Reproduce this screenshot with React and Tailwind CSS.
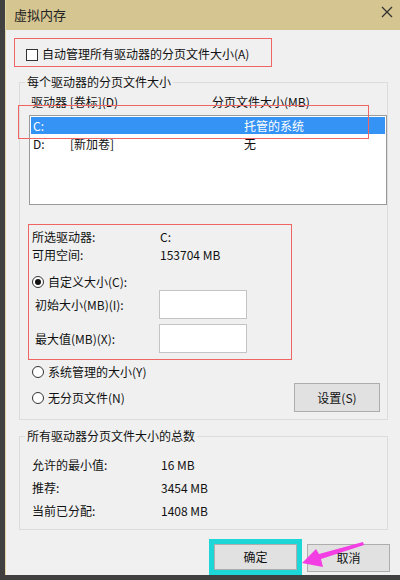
import React from "react";

const font = { fontFamily: '"Noto Sans CJK SC", "Noto Sans", sans-serif' };

function Radio({ checked }) {
  return (
    <span className="w-[12px] h-[12px] rounded-full border border-[#333] bg-white flex items-center justify-center shrink-0">
      {checked && <span className="w-[6px] h-[6px] rounded-full bg-[#111]" />}
    </span>
  );
}

function Row({ label, value, w = "w-[128px]" }) {
  return (
    <div className="flex items-center h-[18px]">
      <span className={w}>{label}</span>
      <span>{value}</span>
    </div>
  );
}

export default function App() {
  return (
    <div style={font} className="w-[400px] h-[580px] bg-[#404040] pl-[5px] relative overflow-hidden text-[12px] text-[#111]">
      <div className="h-[575px] bg-[#f0f0f0] border-l border-[#e2d6a4] flex flex-col">
        {/* title bar */}
        <div className="h-[30px] bg-[#d5c591] flex items-center justify-between pl-[8px] pr-[7px] shrink-0">
          <span className="text-[13px] text-[#222]">虚拟内存</span>
          <svg width="12" height="12" viewBox="0 0 12 12" className="mb-[7px]">
            <path d="M1 1 L11 11 M11 1 L1 11" stroke="#333" strokeWidth="1.3" />
          </svg>
        </div>

        {/* auto manage checkbox */}
        <div className="mt-[8px] ml-[8px] w-[258px] h-[29px] border border-[#f06464] flex items-end pl-[11px] pb-[4px] gap-[4px]">
          <span className="w-[12px] h-[12px] border border-[#333] bg-white mb-[1px]" />
          <span className="leading-[16px]">自动管理所有驱动器的分页文件大小(A)</span>
        </div>

        {/* group 1 */}
        <fieldset className="mt-[7px] ml-[13px] w-[369px] border border-[#dcdcdc] relative">
          <legend className="ml-[5px] px-[2px] leading-[16px]">每个驱动器的分页文件大小</legend>
          <div className="pl-[11px] mt-[4px] flex h-[16px] items-center">
            <span className="w-[181px]">驱动器 [卷标](D)</span>
            <span>分页文件大小(MB)</span>
          </div>
          <div className="ml-[9px] mt-[5px] w-[358px] h-[90px] bg-white border border-[#9a9a9a] pt-[1px] px-[1px]">
            <div className="h-[17px] bg-[#3593f5] text-white flex items-center pl-[2px]">
              <span className="w-[211px]">C:</span>
              <span>托管的系统</span>
            </div>
            <div className="h-[17px] mt-[1px] flex items-center pl-[2px]">
              <span className="w-[37px]">D:</span>
              <span className="w-[174px]">[新加卷]</span>
              <span>无</span>
            </div>
          </div>

          {/* details */}
          <div className="mt-[19px] ml-[8px] w-[264px] h-[136px] border border-[#f06464] pt-[3px] pl-[3px]">
            <Row label="所选驱动器:" value="C:" />
            <Row label="可用空间:" value="153704 MB" />
            <div className="mt-[9px] h-[17px] flex items-center gap-[4px]">
              <Radio checked />
              <span>自定义大小(C):</span>
            </div>
            <div className="flex items-center h-[29px] pl-[3px]">
              <span className="w-[124px] shrink-0">初始大小(MB)(I):</span>
              <span className="w-[88px] h-[29px] bg-white border border-[#c4c4c4]" />
            </div>
            <div className="flex items-center h-[29px] pl-[3px] mt-[5px]">
              <span className="w-[124px] shrink-0">最大值(MB)(X):</span>
              <span className="w-[88px] h-[29px] bg-white border border-[#c4c4c4]" />
            </div>
          </div>

          <div className="mt-[4px] pl-[12px] h-[16px] flex items-center gap-[4px]">
            <Radio />
            <span>系统管理的大小(Y)</span>
          </div>
          <div className="mt-[3px] pl-[12px] pr-[7px] h-[29px] flex items-center gap-[4px] mb-[7px]">
            <Radio />
            <span>无分页文件(N)</span>
            <button className="ml-auto w-[86px] h-[29px] bg-[#e1e1e1] border border-[#adadad] text-[12px]">设置(S)</button>
          </div>
        </fieldset>

        {/* group 2 */}
        <fieldset className="mt-[8px] ml-[13px] w-[369px] border border-[#dcdcdc] pl-[12px] pb-[10px]">
          <legend className="ml-[-7px] px-[2px] leading-[16px]">所有驱动器分页文件大小的总数</legend>
          <div className="mt-[13px] flex flex-col gap-[7px]">
            <div className="flex items-center h-[16px]"><span className="w-[129px]">允许的最小值:</span><span>16 MB</span></div>
            <div className="flex items-center h-[16px]"><span className="w-[129px]">推荐:</span><span>3454 MB</span></div>
            <div className="flex items-center h-[16px]"><span className="w-[129px]">当前已分配:</span><span>1408 MB</span></div>
          </div>
        </fieldset>

        {/* buttons */}
        <div className="mt-[9px] flex justify-end items-start pr-[10px] gap-[5px]">
          <div className="border-[5px] border-[#1cd6d8] relative z-10">
            <button className="w-[83px] h-[26px] bg-[#e1e1e1] border border-[#adadad] text-[12px] block">确定</button>
          </div>
          <button className="mt-[5px] w-[83px] h-[28px] bg-[#e1e1e1] border border-[#adadad] text-[12px]">取消</button>
        </div>
      </div>

      {/* annotation overlays */}
      <div className="absolute left-[18px] top-[105px] w-[351px] h-[34px] border border-[#f06464]" />
      <svg className="absolute left-0 top-0 z-20" width="400" height="580" viewBox="0 0 400 580">
        <path d="M363 542 L364 545 L321 559 L323 567 L302 563 L316 549 L319 554 Z" fill="#f23ee3" />
      </svg>
    </div>
  );
}
